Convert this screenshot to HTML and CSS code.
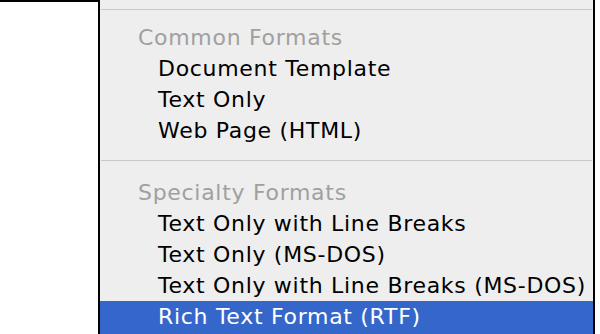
FILE: index.html
```html
<!DOCTYPE html>
<html>
<head>
<meta charset="utf-8">
<link rel="stylesheet" href="styles.css">
</head>
<body>
<div class="page">
  <div class="side"></div>
  <div class="menu">
    <div class="sep top"></div>
    <div class="header first">Common Formats</div>
    <div class="item">Document Template</div>
    <div class="item">Text Only</div>
    <div class="item">Web Page (HTML)</div>
    <div class="divider"><div class="sep"></div></div>
    <div class="header">Specialty Formats</div>
    <div class="item">Text Only with Line Breaks</div>
    <div class="item">Text Only (MS-DOS)</div>
    <div class="item">Text Only with Line Breaks (MS-DOS)</div>
    <div class="item selected">Rich Text Format (RTF)</div>
  </div>
  <div class="rest"></div>
</div>
</body>
</html>
```
FILE: styles.css
```css
html, body {
  margin: 0;
  padding: 0;
  background: #ffffff;
}
.page {
  display: flex;
  width: 600px;
  height: 334px;
  overflow: hidden;
}
.side {
  width: 98px;
  flex: none;
  border-top: 2px solid #000;
  box-sizing: border-box;
  background: #fff;
}
.menu {
  width: 497px;
  flex: none;
  box-sizing: border-box;
  border-left: 2px solid #000;
  border-right: 2px solid #000;
  background: #eeeeee;
  padding-top: 9px;
  display: flex;
  flex-direction: column;
  font-family: "DejaVu Sans", "Verdana", sans-serif;
  font-size: 22px;
  letter-spacing: 0.7px;
}
.rest {
  flex: 1;
  background: #fff;
}
.sep {
  height: 1px;
  background: #c8c8c8;
  margin-left: 1px;
  margin-right: 1px;
}
.sep.top {
  margin-bottom: 12px;
}
.divider {
  height: 31px;
  padding-top: 14px;
  box-sizing: border-box;
}
.header {
  height: 31px;
  line-height: 31px;
  padding-left: 38px;
  color: #a0a0a0;
  white-space: nowrap;
}
.item {
  height: 31px;
  line-height: 31px;
  padding-left: 58px;
  color: #000;
  white-space: nowrap;
}
.item.selected {
  background: #3567cb;
  color: #fff;
  height: 34px;
}
```
